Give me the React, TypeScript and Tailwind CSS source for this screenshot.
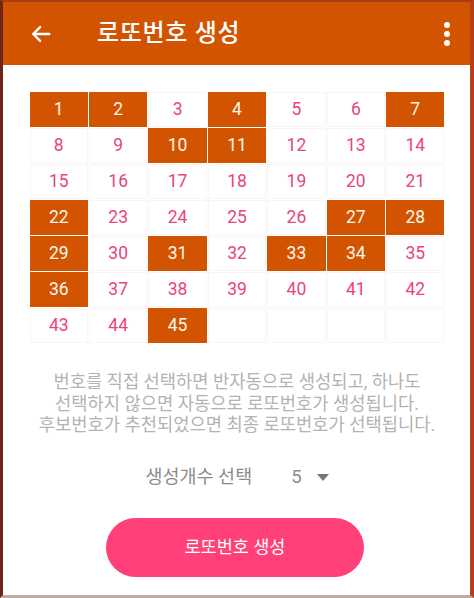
import React from "react";

const selected = new Set([1, 2, 4, 7, 10, 11, 22, 27, 28, 29, 31, 33, 34, 36, 45]);

export default function App() {
  const cells = Array.from({ length: 49 }, (_, i) => i + 1);
  return (
    <div
      className="w-[474px] h-[598px] flex flex-col bg-white border-l-[3px] border-l-[#6e2612] border-t-2 border-t-[#a83c12] border-r-[4px] border-r-[#b4401e] border-b-[3px] border-b-[#bfaaa0] overflow-hidden"
      style={{ fontFamily: "Roboto, 'Noto Sans CJK KR', sans-serif" }}
    >
      <div className="h-[63px] shrink-0 bg-[#d35400] flex items-center">
        <div className="w-[94px] pl-[27px] flex items-center">
          <svg width="22" height="22" viewBox="0 0 24 24" fill="none" stroke="white" strokeWidth="2.6" strokeLinecap="round" strokeLinejoin="round">
            <path d="M21 12H4" />
            <path d="M11 4.5L3.5 12L11 19.5" />
          </svg>
        </div>
        <div className="flex-1 text-white text-[24px] font-medium tracking-[0.7px] -mt-[1px]">로또번호 생성</div>
        <div className="w-[40px] flex justify-center pr-[6px]">
          <svg width="8" height="26" viewBox="0 0 8 26">
            <circle cx="4" cy="4" r="3" fill="white" />
            <circle cx="4" cy="13" r="3" fill="white" />
            <circle cx="4" cy="22" r="3" fill="white" />
          </svg>
        </div>
      </div>

      <div className="flex flex-col items-center pl-[1px]">
        <div className="mt-[27px] w-[415px] grid grid-cols-7 gap-[1px]">
          {cells.map((n) => {
            const sel = selected.has(n);
            const empty = n > 45;
            return (
              <div
                key={n}
                className={
                  "h-[35px] flex items-center justify-center text-[17.5px] " +
                  (sel
                    ? "bg-[#d35400] text-[#fff6ee]"
                    : "bg-white text-[#e8457c] shadow-[inset_0_0_0_1px_#faf4f4]")
                }
              >
                {empty ? "" : n}
              </div>
            );
          })}
        </div>

        <div className="mt-[29px] text-center text-[17.7px] leading-[21.7px] text-[#b3b3b3] whitespace-nowrap">
          <div>번호를 직접 선택하면 반자동으로 생성되고, 하나도</div>
          <div>선택하지 않으면 자동으로 로또번호가 생성됩니다.</div>
          <div>후보번호가 추천되었으면 최종 로또번호가 선택됩니다.</div>
        </div>

        <div className="mt-[29px] flex items-center h-[24px] text-[18.5px] text-[#8c8c8c]">
          <span className="mr-[39px]">생성개수 선택</span>
          <span className="mr-[15px]">5</span>
          <svg width="12" height="8" viewBox="0 0 12 8">
            <path d="M0 0H12L6 7Z" fill="#777" />
          </svg>
        </div>

        <button className="mt-[28px] w-[258px] h-[59px] rounded-full bg-[#ff4079] text-white text-[17.5px] flex items-center justify-center -ml-[4px]">
          로또번호 생성
        </button>
      </div>
    </div>
  );
}
